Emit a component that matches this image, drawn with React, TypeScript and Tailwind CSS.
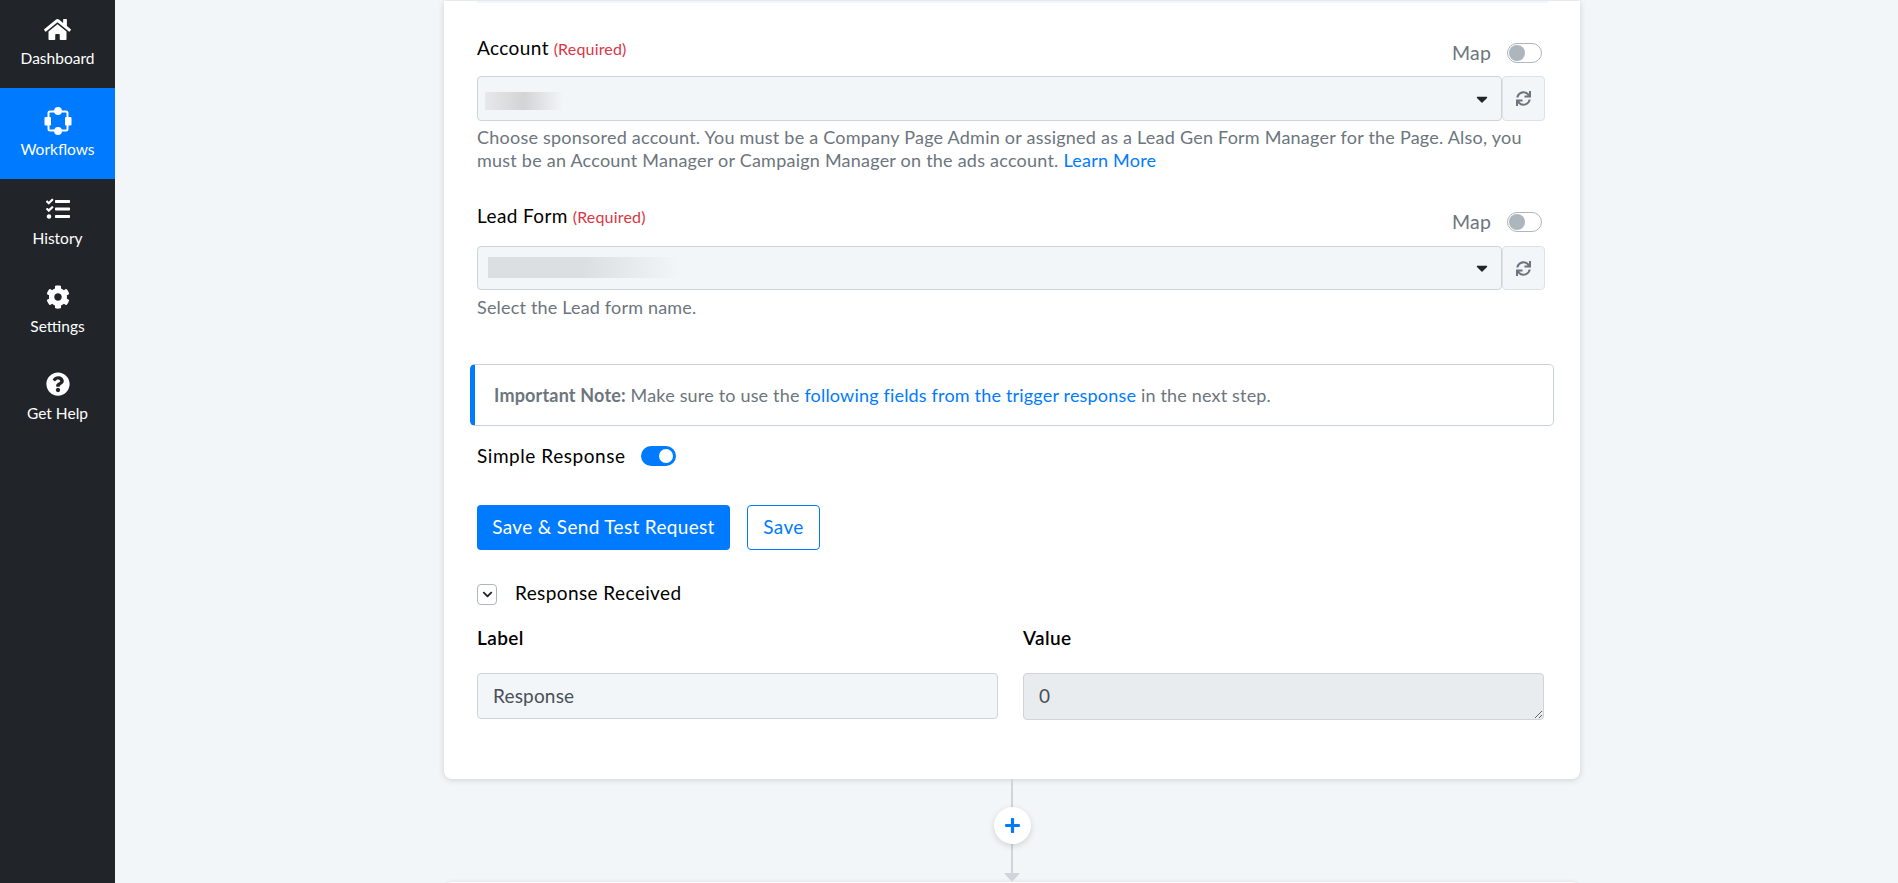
import { FaHome, FaTasks, FaCog, FaQuestionCircle, FaSync, FaPlus, FaCaretDown, FaChevronDown } from 'react-icons/fa';
import type { ReactNode } from 'react';

const WorkflowIcon = () => (
  <svg width="28" height="28" viewBox="0 0 28 28" fill="none">
    <rect x="4.5" y="4.5" width="19" height="19" rx="1.5" stroke="white" strokeWidth="2" />
    <circle cx="14" cy="4" r="3.9" fill="white" />
    <circle cx="14" cy="24" r="3.9" fill="white" />
    <rect x="0.5" y="10" width="6.5" height="8.5" rx="1" fill="white" />
    <rect x="21" y="10" width="6.5" height="8.5" rx="1" fill="white" />
  </svg>
);

const navItems: { label: string; icon: ReactNode; active?: boolean; h: string }[] = [
  { label: 'Dashboard', icon: <FaHome size={27} />, h: 'h-[88px] pt-[14px]' },
  { label: 'Workflows', icon: <WorkflowIcon />, active: true, h: 'h-[91px] pt-[18px]' },
  { label: 'History', icon: <FaTasks size={24} />, h: 'h-[88px] pt-[15px]' },
  { label: 'Settings', icon: <FaCog size={24} />, h: 'h-[87px] pt-[15px]' },
  { label: 'Get Help', icon: <FaQuestionCircle size={24} />, h: 'h-[87px] pt-[15px]' },
];

const Sidebar = () => (
  <div className="w-[115px] shrink-0 h-full bg-[#212529] text-white">
    {navItems.map((item) => (
      <div
        key={item.label}
        className={`flex flex-col items-center ${item.h} ${item.active ? 'bg-[#007bff]' : ''}`}
      >
        <div className="h-[30px] flex items-center justify-center">{item.icon}</div>
        <div className={`text-[15.5px] tracking-normal leading-[22px] ${item.active ? 'mt-[2px]' : 'mt-[3px]'}`}>{item.label}</div>
      </div>
    ))}
  </div>
);

const MapSwitch = () => (
  <div className="flex items-center pt-[38px]">
    <span className="text-[19.5px] leading-[24px] text-[#6c757d]">Map</span>
    <div className="ml-[16px] mr-[3px] w-[35px] h-[20px] rounded-full border border-[#adb5bd] bg-white flex items-center pl-[1px]">
      <div className="w-[16px] h-[16px] rounded-full bg-[#adb5bd]" />
    </div>
  </div>
);

const SelectRow = ({ blurClass, h }: { blurClass: string; h: string }) => (
  <div className={`flex ${h}`}>
    <div className="relative flex-1 flex items-center justify-end pr-[10px] bg-[#f3f6f9] border border-[#ced4da] rounded-[4px]">
      <div className={`absolute ${blurClass}`} />
      <FaCaretDown size={18} className="text-[#212529]" />
    </div>
    <div className="w-[43px] flex items-center justify-center bg-[#f3f6f9] border border-[#dee2e6] rounded-[4px]">
      <FaSync size={15} className="text-[#6c757d]" />
    </div>
  </div>
);

const Label = ({ text, pt }: { text: string; pt: string }) => (
  <div className={`${pt} leading-[26px]`}>
    <span className="text-[19px] tracking-[0.4px] text-black">{text}</span>{' '}
    <span className="text-[16px] text-[#dc3545]">(Required)</span>
  </div>
);

export default function App() {
  return (
    <div
      className="flex h-screen overflow-hidden bg-[#f3f6f9] text-[18px] tracking-[0.18px]"
      style={{ fontFamily: 'Lato, "Open Sans", sans-serif' }}
    >
      <Sidebar />
      <div className="flex-1 h-full overflow-hidden pl-[329px]">
        <div className="w-[1136px] h-[778px] bg-white rounded-b-[8px] shadow-[0_1px_6px_rgba(0,0,0,0.15)] pl-[33px] pr-[35px]">
          <div className="h-[2px] mt-[1px] -mr-[3px] bg-[#f0f5fd]" />

          <div className="flex justify-between items-start h-[73px]">
            <Label text="Account" pt="pt-[32px]" />
            <MapSwitch />
          </div>
          <SelectRow h="h-[45px]" blurClass="left-[7px] top-[15px] w-[78px] h-[18px] bg-gradient-to-r from-[#e6e8ea] via-[#d2d4d5] to-[#f3f6f9]" />
          <p className="mt-[5px] text-[#6c757d] leading-[23px] tracking-[0.23px]">
            Choose sponsored account. You must be a Company Page Admin or assigned as a Lead Gen Form Manager for the Page. Also, you must be an Account Manager or Campaign Manager on the ads account.{' '}
            <span className="text-[#007bff]">Learn More</span>
          </p>

          <div className="flex justify-between items-start h-[74px]">
            <Label text="Lead Form" pt="pt-[31px]" />
            <MapSwitch />
          </div>
          <SelectRow h="h-[44px]" blurClass="left-[10px] top-[10px] w-[192px] h-[21px] bg-gradient-to-r from-[#dcdfe1] via-[#dcdfe1] to-[#f3f6f9]" />
          <p className="mt-[6px] text-[#6c757d] leading-[23px]">Select the Lead form name.</p>

          <div className="mt-[45px] -ml-[7px] w-[1084px] h-[62px] flex items-center pl-[19px] bg-white border border-[#c8d0e4] border-l-[5px] border-l-[#007bff] rounded-[5px]">
            <p className="text-[#6c757d]">
              <b>Important Note:</b> Make sure to use the{' '}
              <span className="text-[#007bff]">following fields from the trigger response</span> in the next step.
            </p>
          </div>

          <div className="flex items-center mt-[19px] h-[22px]">
            <span className="text-[19px] tracking-[0.55px] text-black">Simple Response</span>
            <div className="ml-[15px] w-[35px] h-[20px] rounded-full bg-[#007bff] flex items-center justify-end pr-[3px]">
              <div className="w-[14px] h-[14px] rounded-full bg-white" />
            </div>
          </div>

          <div className="flex mt-[38px]">
            <button className="w-[253px] h-[45px] pb-[1px] rounded-[4px] bg-[#007bff] text-white text-[19px] tracking-[0.33px]">Save &amp; Send Test Request</button>
            <button className="ml-[17px] w-[73px] h-[45px] pb-[1px] rounded-[4px] border border-[#007bff] text-[#007bff] text-[19px] tracking-[0.4px]">Save</button>
          </div>

          <div className="flex items-start h-[21px] mt-[34px]">
            <div className="w-[20px] h-[21px] rounded-[4px] border border-[#adb5bd] flex items-center justify-center">
              <FaChevronDown size={11} className="text-[#212529]" />
            </div>
            <span className="ml-[18px] -mt-[3px] text-[19px] tracking-[0.4px] leading-[24px] text-black">Response Received</span>
          </div>

          <div className="grid grid-cols-2 gap-x-[25px] mt-[21px] mr-[1px]">
            <div>
              <div className="text-[19px] tracking-[0.4px] font-semibold leading-[24px] text-black">Label</div>
              <div className="mt-[23px] h-[46px] flex items-center px-[15px] bg-[#f3f6f9] border border-[#ced4da] rounded-[4px] text-[#495057] text-[19px]">Response</div>
            </div>
            <div>
              <div className="text-[19px] tracking-[0.4px] font-semibold leading-[24px] text-black">Value</div>
              <textarea
                readOnly
                value="0"
                className="block mt-[23px] w-full h-[47px] px-[15px] py-[8px] bg-[#e9ecef] border border-[#ced4da] rounded-[4px] text-[#495057] text-[19px] outline-none"
              />
            </div>
          </div>
        </div>

        <div className="w-[1136px] h-[103px] flex flex-col items-center relative">
          <div className="w-[2px] h-[94px] bg-[#d1d5db]" />
          <div className="w-0 h-0 border-x-[8px] border-x-transparent border-t-[9px] border-t-[#d1d5db]" />
          <div className="absolute top-[28px] w-[37px] h-[37px] rounded-full bg-white shadow-[0_2px_6px_rgba(0,0,0,0.15)] flex items-center justify-center">
            <FaPlus size={17} className="text-[#007bff]" />
          </div>
        </div>
        <div className="w-[1136px] h-[20px] bg-white rounded-t-[8px] shadow-[0_0_4px_rgba(0,0,0,0.1)]" />
      </div>
    </div>
  );
}
